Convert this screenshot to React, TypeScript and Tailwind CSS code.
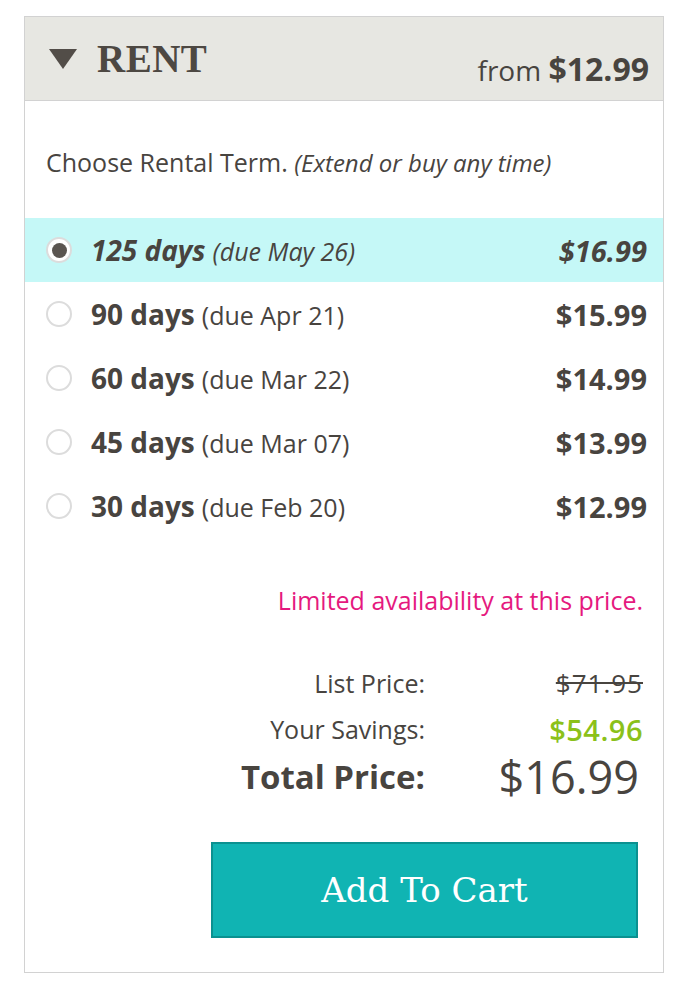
import React from "react";

const rows = [
  { d: "125 days", due: "(due May 26)", p: "$16.99", sel: true },
  { d: "90 days", due: "(due Apr 21)", p: "$15.99" },
  { d: "60 days", due: "(due Mar 22)", p: "$14.99" },
  { d: "45 days", due: "(due Mar 07)", p: "$13.99" },
  { d: "30 days", due: "(due Feb 20)", p: "$12.99" },
];

export default function App() {
  return (
    <div className="w-[689px] h-[1000px] bg-white pt-[16px] pl-[24px]" style={{ fontFamily: "'Open Sans', 'Noto Sans', sans-serif" }}>
      <div className="w-[640px] h-[957px] border border-[#d2d2d2] bg-white flex flex-col text-[#48443f]">
        <div className="h-[84px] shrink-0 bg-[#e7e7e2] border-b border-[#d2d2d2] flex items-start justify-between pl-[24px] pr-[14px]">
          <div className="flex items-center mt-[22px] gap-[20px]">
            <svg width="28" height="20" viewBox="0 0 28 20"><polygon points="0,0 28,0 14,20" fill="#524d48" /></svg>
            <span className="text-[39px] font-bold leading-none tracking-[0.5px] text-[#4d4842]" style={{ fontFamily: "'Liberation Serif', serif" }}>RENT</span>
          </div>
          <div className="mt-[36px] text-[28px] leading-none">
            <span className="font-normal">from </span>
            <span className="font-bold text-[32px]">$12.99</span>
          </div>
        </div>
        <div className="mt-[49px] pl-[21px] text-[25px] leading-none">
          Choose Rental Term. <span className="italic text-[24px]">(Extend or buy any time)</span>
        </div>
        <div className="mt-[43px] flex flex-col">
          {rows.map((r) => (
            <div key={r.d} className={`h-[64px] flex items-center pl-[21px] pr-[16px] ${r.sel ? "bg-[#c5f8f7]" : ""}`}>
              <div className="w-[26px] h-[26px] rounded-full border-2 border-[#dcdcdc] bg-white flex items-center justify-center">
                {r.sel && <div className="w-[15px] h-[15px] rounded-full bg-[#5a5550]" />}
              </div>
              <div className={`ml-[19px] flex items-baseline leading-none ${r.sel ? "italic" : ""}`}>
                <span className="text-[28px] font-bold">{r.d}</span>
                <span className="ml-[7px] text-[25px]">{r.due}</span>
              </div>
              <div className={`ml-auto text-[29px] leading-none font-bold ${r.sel ? "italic" : ""}`}>{r.p}</div>
            </div>
          ))}
        </div>
        <div className="mt-[47px] h-[30px] pr-[20px] flex items-center justify-end text-[25px] text-[#e5197e] leading-none">
          Limited availability at this price.
        </div>
        <div className="mt-[45px] flex flex-col leading-none">
          <div className="h-[46px] flex items-center">
            <div className="w-[400px] text-right text-[25px]">List Price:</div>
            <div className="w-[218px] text-right line-through text-[26px] tracking-[1px]">$71.95</div>
          </div>
          <div className="h-[46px] flex items-center">
            <div className="w-[400px] text-right text-[25px]">Your Savings:</div>
            <div className="w-[218px] text-right text-[#8bc11a] font-semibold text-[29px] tracking-[0.5px]">$54.96</div>
          </div>
          <div className="h-[48px] flex items-center">
            <div className="w-[400px] text-right font-bold text-[33px]">Total Price:</div>
            <div className="w-[214px] text-right text-[45px]">$16.99</div>
          </div>
        </div>
        <div className="mt-[42px] ml-[186px] w-[427px] h-[96px] shrink-0 bg-[#10b4b3] border-2 border-[#0b9190] flex items-center justify-center">
          <span className="text-white text-[34px]" style={{ fontFamily: "'DejaVu Serif', serif" }}>Add To Cart</span>
        </div>
      </div>
    </div>
  );
}
